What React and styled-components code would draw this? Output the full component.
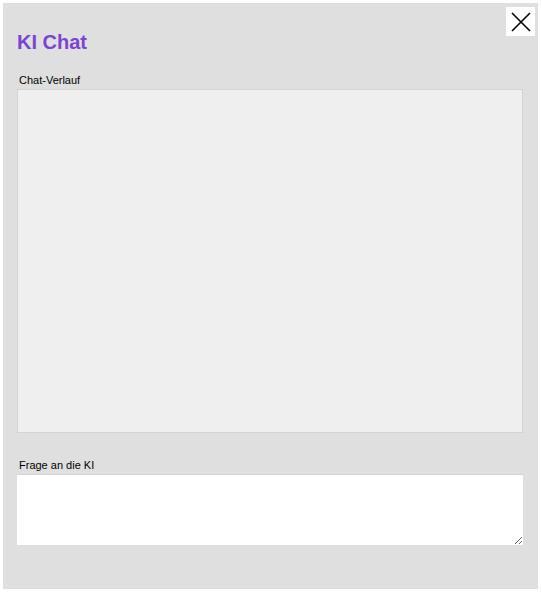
import React from 'react';
import styled, { createGlobalStyle } from 'styled-components';

const GlobalStyle = createGlobalStyle`
  html, body {
    margin: 0;
    padding: 0;
    background: #fff;
    font-family: "Liberation Sans", Arial, sans-serif;
  }
`;

const App = () => {
  return (
    <>
      <GlobalStyle />
      <Dialog>
        <CloseButton aria-label="Schließen">
          <svg width="22" height="22" viewBox="0 0 22 22">
            <path d="M2 2 L20 20 M20 2 L2 20" stroke="#000" strokeWidth="1.6" fill="none" />
          </svg>
        </CloseButton>
        <Title>KI Chat</Title>
        <Field>
          <Label>Chat-Verlauf</Label>
          <History />
        </Field>
        <Field $spaced>
          <Label>Frage an die KI</Label>
          <Question />
        </Field>
      </Dialog>
    </>
  );
};

export default App;

const Dialog = styled.div`
  position: relative;
  margin: 3px;
  width: 535px;
  height: 586px;
  box-sizing: border-box;
  padding: 28px 15px 0 14px;
  background: #dfdfdf;
  display: flex;
  flex-direction: column;
`;

const CloseButton = styled.button`
  position: absolute;
  top: 4px;
  right: 3px;
  width: 29px;
  height: 29px;
  padding: 0;
  border: none;
  background: #fff;
  display: flex;
  align-items: center;
  justify-content: center;
  cursor: pointer;
`;

const Title = styled.h2`
  margin: 0;
  font-size: 20px;
  font-weight: bold;
  line-height: 23px;
  color: #7a45d3;
`;

const Field = styled.div`
  display: flex;
  flex-direction: column;
  margin-top: ${p => (p.$spaced ? '26px' : '20px')};
`;

const Label = styled.label`
  font-size: 11px;
  line-height: 13px;
  color: #000;
  padding-left: 2px;
  margin-bottom: 2px;
`;

const History = styled.div`
  height: 344px;
  box-sizing: border-box;
  background: #efefef;
  border: 1px solid #d3d3d3;
`;

const Question = styled.textarea`
  height: 71px;
  box-sizing: border-box;
  background: #fff;
  border: 1px solid #d3d3d3;
  border-width: 1px 0 0 0;
  resize: vertical;
  font-family: "Liberation Sans", Arial, sans-serif;
  font-size: 12px;
`;
